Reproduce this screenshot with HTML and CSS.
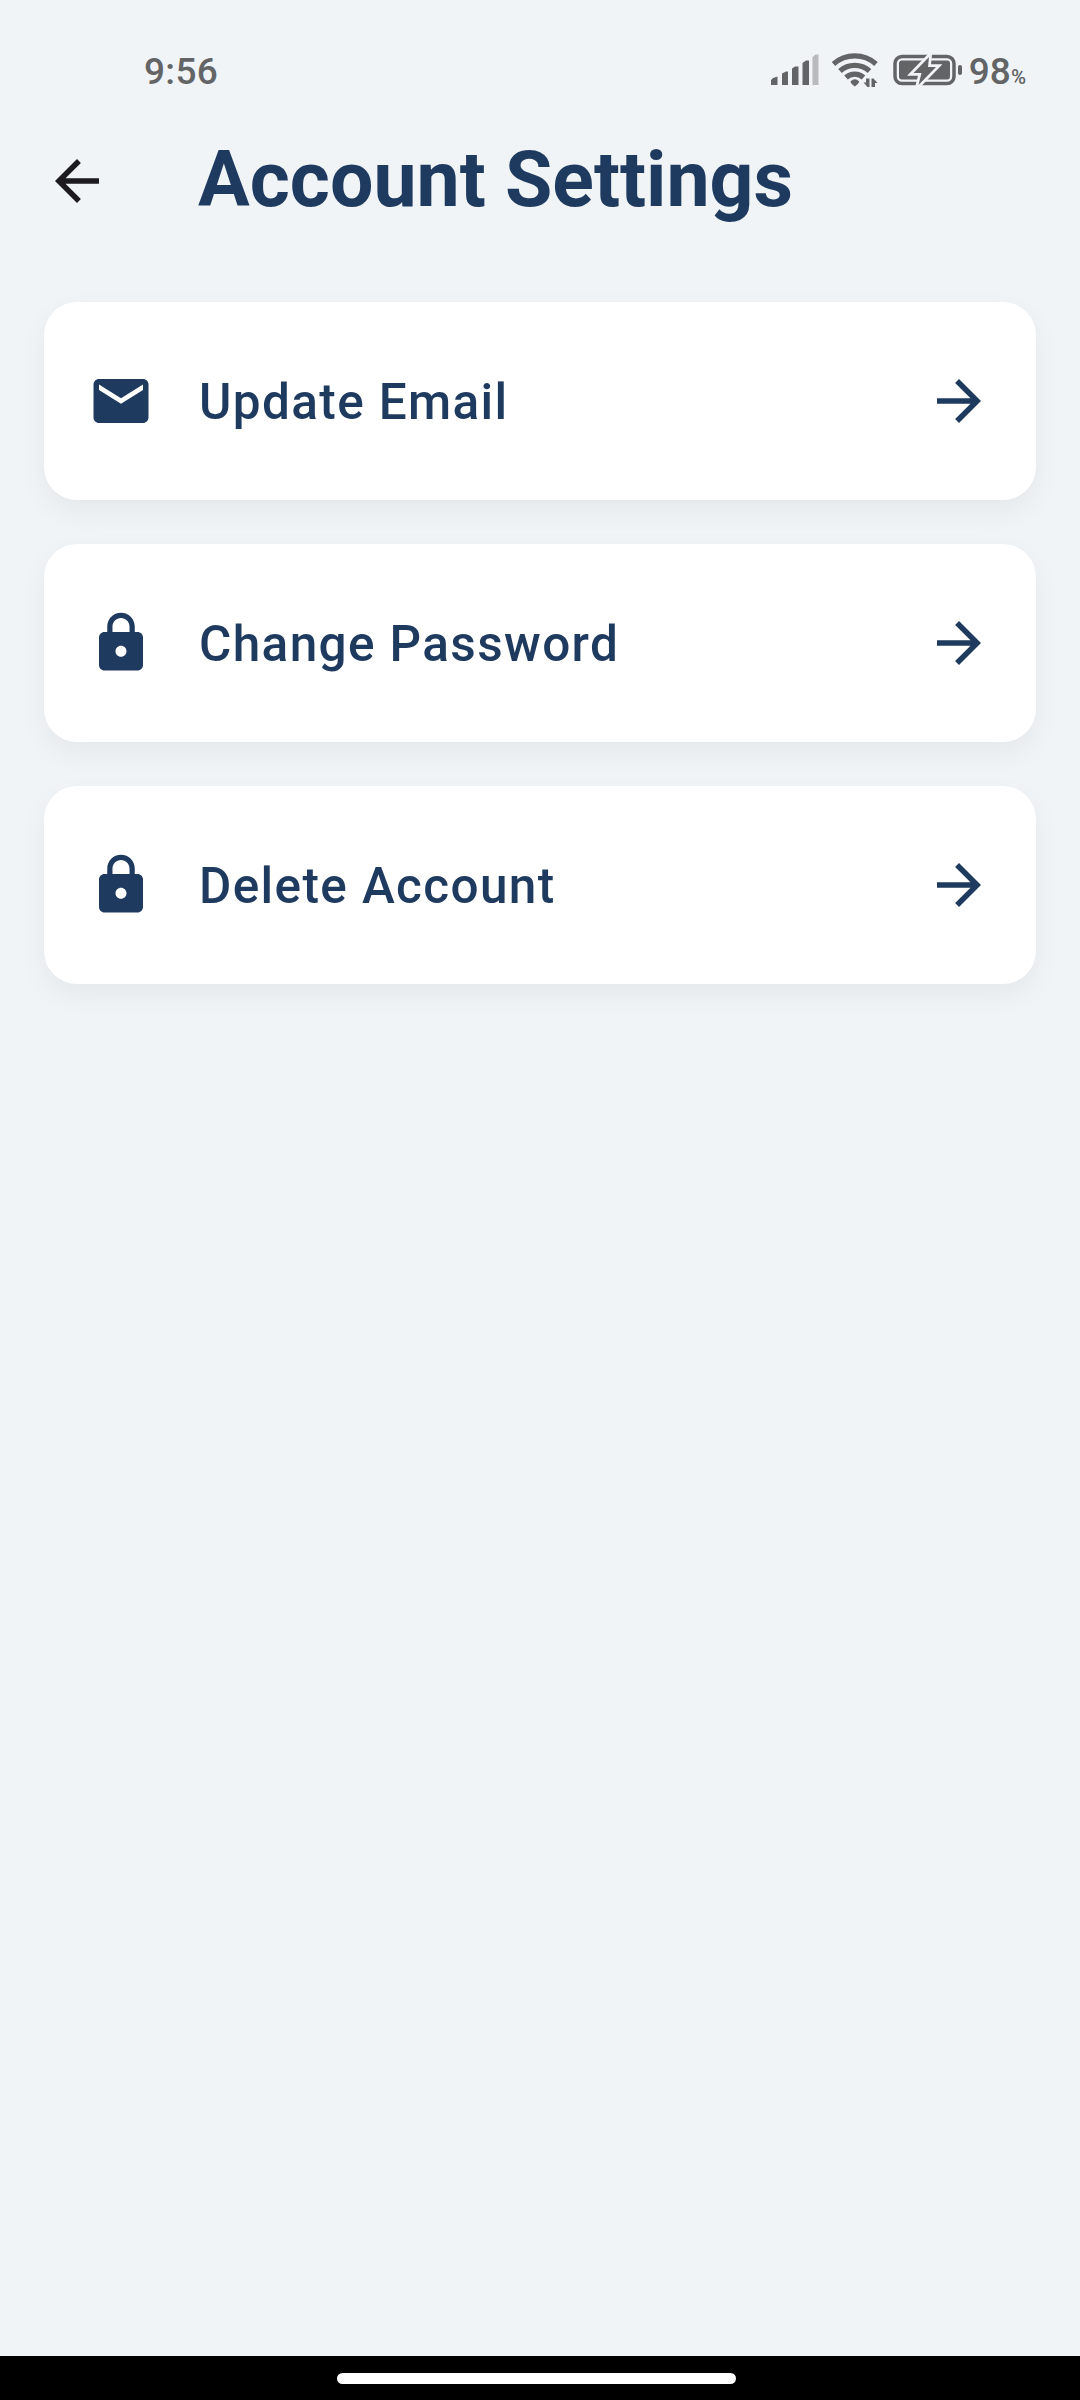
FILE: index.html
```html
<!DOCTYPE html>
<html lang="en">
<head>
<meta charset="utf-8">
<title>Account Settings</title>
<link rel="stylesheet" href="styles.css">
</head>
<body>
<div class="screen">
  <header class="status">
    <span class="clock">9:56</span>
    <svg class="signal" viewBox="0 0 48 32" width="48" height="32"><path d="M0 31V26L2 24L6.500 22.500V31ZM11 31V19.500L15 17.500H17V31ZM21 31V14.500L24 12.500H27.500V31ZM31.500 31V9L35 6.500H38V31Z"/><path class="dim" d="M41.500 31V3L44.500 0.500H47.500V31Z"/></svg>
    <svg class="wifi" viewBox="0 0 48 36" width="48" height="36"><g class="arcs"><path d="M2.500 12A32 32 0 0 1 45 12"/><path d="M9 19A22 22 0 0 1 38.500 19"/><path d="M15 25.500A13 13 0 0 1 32.500 25.500"/></g><path d="M19.500 29.500Q23.800 25 28.200 29.500Q28 31.500 23.800 34.500Q19.500 31.500 19.500 29.500Z"/><path d="M35 26.500H38.500V35H36.500L32.500 30.500H35ZM40.500 35V26.500H42.500L46.500 31H44V35Z"/></svg>
    <svg class="battery" viewBox="0 0 70 34" width="70" height="34"><rect class="shell" x="2" y="3.500" width="59" height="27" rx="7"/><rect x="6" y="7.500" width="51" height="19" rx="3"/><rect x="65" y="12" width="4" height="10" rx="2"/><path class="bolt" d="M36 4L20.500 20H28.500L25.500 32L43 14H35Z"/></svg>
    <span class="level">98<small>%</small></span>
  </header>
  <div class="appbar">
    <svg class="icon back" viewBox="0 0 24 24"><path d="M20 11H7.830l5.590-5.590L12 4l-8 8 8 8 1.410-1.410L7.830 13H20v-2z"/></svg>
    <h1>Account Settings</h1>
  </div>
  <main class="list">
    <div class="card">
      <svg class="icon" viewBox="0 0 24 24"><path d="M20 4H4c-1.100 0-1.990.9-1.990 2L2 18c0 1.100.9 2 2 2h16c1.100 0 2-.9 2-2V6c0-1.100-.9-2-2-2zm0 4l-8 5-8-5V6l8 5 8-5v2z"/></svg>
      <span class="label">Update Email</span>
      <svg class="icon" viewBox="0 0 24 24"><path d="M12 4l-1.410 1.410L16.170 11H4v2h12.170l-5.580 5.590L12 20l8-8z"/></svg>
    </div>
    <div class="card">
      <svg class="icon" viewBox="0 0 24 24"><path d="M18 8h-1V6c0-2.760-2.240-5-5-5S7 3.240 7 6v2H6c-1.100 0-2 .9-2 2v10c0 1.100.9 2 2 2h12c1.100 0 2-.9 2-2V10c0-1.100-.9-2-2-2zm-6 9c-1.100 0-2-.9-2-2s.9-2 2-2 2 .9 2 2-.9 2-2 2zm3.100-9H8.900V6c0-1.710 1.390-3.100 3.100-3.100 1.710 0 3.100 1.390 3.100 3.100v2z"/></svg>
      <span class="label">Change Password</span>
      <svg class="icon" viewBox="0 0 24 24"><path d="M12 4l-1.410 1.410L16.170 11H4v2h12.170l-5.580 5.590L12 20l8-8z"/></svg>
    </div>
    <div class="card">
      <svg class="icon" viewBox="0 0 24 24"><path d="M18 8h-1V6c0-2.760-2.240-5-5-5S7 3.240 7 6v2H6c-1.100 0-2 .9-2 2v10c0 1.100.9 2 2 2h12c1.100 0 2-.9 2-2V10c0-1.100-.9-2-2-2zm-6 9c-1.100 0-2-.9-2-2s.9-2 2-2 2 .9 2 2-.9 2-2 2zm3.100-9H8.900V6c0-1.710 1.390-3.100 3.100-3.100 1.710 0 3.100 1.390 3.100 3.100v2z"/></svg>
      <span class="label">Delete Account</span>
      <svg class="icon" viewBox="0 0 24 24"><path d="M12 4l-1.410 1.410L16.170 11H4v2h12.170l-5.580 5.590L12 20l8-8z"/></svg>
    </div>
  </main>
  <footer class="navbar"><div class="handle"></div></footer>
</div>
</body>
</html>
```
FILE: styles.css
```css
* { box-sizing: border-box; }
body { margin: 0; font-family: Roboto, "Liberation Sans", sans-serif; }
.screen {
  width: 1080px;
  height: 2400px;
  display: flex;
  flex-direction: column;
  background: #f0f4f7;
  color: #1e3a5f;
}
svg { display: block; flex: none; fill: currentColor; }

.status {
  height: 104px;
  padding: 36px 54px 0 144px;
  display: flex;
  align-items: center;
  color: #636466;
  font-size: 37px;
  font-weight: 470;
}
.clock { flex: 1; padding-top: 3px; line-height: 65px; letter-spacing: .3px; }
.signal { margin-right: 12px; }
.signal .dim { opacity: .4; }
.wifi { margin-right: 14px; }
.wifi .arcs { fill: none; stroke: currentColor; stroke-width: 5.300; }
.battery { margin-right: 6px; }
.battery .shell { fill: none; stroke: currentColor; stroke-width: 3.500; }
.battery .bolt { stroke: #f0f4f7; stroke-width: 5.500; paint-order: stroke; }
.level { padding-top: 2px; }
.level small { font-size: 20.500px; font-weight: 500; }

.appbar {
  height: 154px;
  padding: 0 44px;
  display: flex;
  align-items: center;
  gap: 88px;
}
.icon { width: 66px; height: 66px; }
.back { color: #1d1b20; }
h1 { margin: 0; padding-bottom: 2px; font-size: 77px; font-weight: 700; line-height: 90px; }

.list {
  flex: 1;
  padding: 44px;
  display: flex;
  flex-direction: column;
  gap: 44px;
}
.card {
  height: 198px;
  padding: 0 44px;
  display: flex;
  align-items: center;
  gap: 44px;
  border-radius: 33px;
  background: #fff;
  box-shadow: 0 11px 27.500px rgba(0, 0, 0, .05);
}
.label { flex: 1; padding: 2px 0 0 1px; font-size: 49.500px; font-weight: 540; letter-spacing: 1.375px; }

.navbar {
  height: 44px;
  padding: 17px 0 0 337px;
  background: #000;
}
.handle { width: 399px; height: 10.500px; border-radius: 6px; background: #fff; }
```
